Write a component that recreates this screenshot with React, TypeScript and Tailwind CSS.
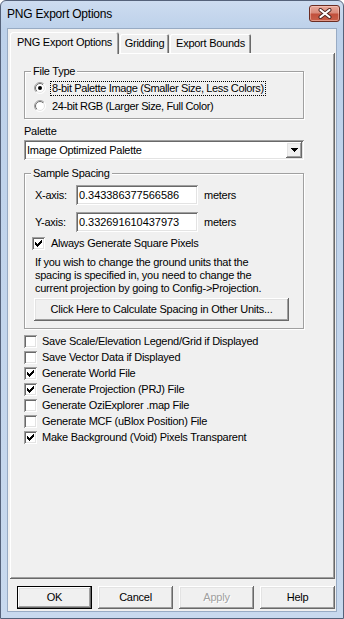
import React, { useId } from "react";

const raised =
  "shadow-[inset_-1px_-1px_0_#696969,inset_1px_1px_0_#ffffff,inset_-2px_-2px_0_#a0a0a0,inset_2px_2px_0_#e3e3e3]";
const sunken =
  "shadow-[inset_1px_1px_0_#a0a0a0,inset_-1px_-1px_0_#ffffff,inset_2px_2px_0_#696969,inset_-2px_-2px_0_#e3e3e3]";
const etched =
  "border border-[#a0a0a0] shadow-[inset_1px_1px_0_#ffffff,1px_1px_0_#ffffff]";

function Check({ checked }: { checked?: boolean }) {
  const cols = [5, 6, 7, 6, 5, 4, 3];
  return (
    <div className={`w-[13px] h-[13px] bg-white shrink-0 ${sunken}`}>
      {checked && (
        <svg width="13" height="13" viewBox="0 0 13 13" shapeRendering="crispEdges">
          {cols.map((y, i) => (
            <rect key={i} x={3 + i} y={y} width="1" height="3" fill="#000" />
          ))}
        </svg>
      )}
    </div>
  );
}

function Radio({ checked }: { checked?: boolean }) {
  const id = useId().replace(/[^a-zA-Z0-9]/g, "");
  return (
    <svg width="12" height="12" viewBox="0 0 12 12" className="shrink-0">
      <defs>
        <linearGradient id={`o${id}`} x1="0" y1="0" x2="1" y2="1">
          <stop offset="0.5" stopColor="#a0a0a0" />
          <stop offset="0.5" stopColor="#ffffff" />
        </linearGradient>
        <linearGradient id={`i${id}`} x1="0" y1="0" x2="1" y2="1">
          <stop offset="0.5" stopColor="#696969" />
          <stop offset="0.5" stopColor="#e3e3e3" />
        </linearGradient>
      </defs>
      <circle cx="6" cy="6" r="5.5" fill="#fff" stroke={`url(#o${id})`} />
      <circle cx="6" cy="6" r="4.5" fill="#fff" stroke={`url(#i${id})`} />
      {checked && <circle cx="6" cy="6" r="2" fill="#000" />}
    </svg>
  );
}

function CheckRow({ checked, label }: { checked?: boolean; label: string }) {
  return (
    <div className="flex items-center h-[16px]">
      <Check checked={checked} />
      <span className="ml-[5px]">{label}</span>
    </div>
  );
}

function CloseButton() {
  return (
    <div className="mt-[4px] w-[31px] h-[17px] rounded-[3px] border border-[#6b2c22] bg-[linear-gradient(to_bottom,#e9a99b_0%,#d98b7b_45%,#c1503c_55%,#c9604a_100%)] shadow-[inset_0_0_0_1px_rgba(255,220,210,0.45)] flex items-center justify-center">
      <svg width="14" height="11" viewBox="0 0 14 11">
        <path d="M2.5 2 L11.5 9 M11.5 2 L2.5 9" stroke="#4a2420" strokeWidth="4" strokeLinecap="round" fill="none" />
        <path d="M2.5 2 L11.5 9 M11.5 2 L2.5 9" stroke="#ffffff" strokeWidth="2.2" strokeLinecap="round" fill="none" />
      </svg>
    </div>
  );
}

function BottomButton({
  label,
  isDefault,
  disabled,
}: {
  label: string;
  isDefault?: boolean;
  disabled?: boolean;
}) {
  return (
    <div
      className={`w-[75px] h-[23px] flex items-center justify-center bg-[#f0f0f0] ${raised} ${
        isDefault ? "border border-[#000000]" : ""
      } ${disabled ? "text-[#a0a0a0] [text-shadow:1px_1px_0_#ffffff]" : ""}`}
    >
      {label}
    </div>
  );
}

export default function App() {
  return (
    <div className="w-[344px] h-[619px] flex flex-col border border-[#55627a] rounded-t-[6px] bg-[linear-gradient(to_bottom,#cddcf0,#bdd1ea_28px,#c8d9ee)] font-['Liberation_Sans',Arial,sans-serif] text-[11px] leading-[13px] tracking-[-0.25px] text-black overflow-hidden">
      {/* Title bar */}
      <div className="h-[27px] shrink-0 flex items-start pl-[6px] pr-[3px]">
        <span className="text-[12px] leading-[14px] mt-[6px] tracking-[-0.2px]">PNG Export Options</span>
        <div className="ml-auto">
          <CloseButton />
        </div>
      </div>

      {/* Client area */}
      <div className="mx-[6px] mb-[6px] flex-1 flex flex-col bg-[#f0f0f0] border border-[#98abc4]">
        {/* Tabs */}
        <div className="pt-[3px] pl-[2px] flex items-end h-[24px] shrink-0">
          <div className="relative z-10 -mb-px w-[109px] h-[22px] rounded-t-[3px] bg-[#f0f0f0] shadow-[inset_1px_1px_0_#ffffff,inset_-1px_0_0_#696969,inset_-2px_0_0_#a0a0a0] flex items-center justify-center pb-[1px]">
            PNG Export Options
          </div>
          <div className="ml-px w-[49px] h-[19px] rounded-t-[2px] shadow-[inset_1px_1px_0_#ffffff,inset_-1px_0_0_#696969,inset_-2px_0_0_#a0a0a0] flex items-center justify-center">
            Gridding
          </div>
          <div className="ml-px w-[81px] h-[19px] rounded-t-[2px] shadow-[inset_1px_1px_0_#ffffff,inset_-1px_0_0_#696969,inset_-2px_0_0_#a0a0a0] flex items-center justify-center">
            Export Bounds
          </div>
        </div>

        {/* Tab page */}
        <div className="ml-[2px] w-[325px] h-[526px] shrink-0 bg-[#f0f0f0] shadow-[inset_-1px_-1px_0_#696969,inset_1px_1px_0_#ffffff,inset_-2px_-2px_0_#a0a0a0] pl-[14px] pt-[18px] flex flex-col">
          {/* File Type */}
          <div className={`relative w-[280px] h-[48px] ${etched} pt-[7px] pl-[9px] flex flex-col`}>
            <span className="absolute left-[6px] -top-[7px] px-[2px] bg-[#f0f0f0]">File Type</span>
            <div className="flex items-center h-[18px]">
              <Radio checked />
              <span className="ml-[4px] px-px border border-dotted border-black tracking-[-0.36px]">
                8-bit Palette Image (Smaller Size, Less Colors)
              </span>
            </div>
            <div className="flex items-center h-[18px]">
              <Radio />
              <span className="ml-[6px] tracking-[-0.36px]">24-bit RGB (Larger Size, Full Color)</span>
            </div>
          </div>

          {/* Palette */}
          <div className="mt-[6px]">Palette</div>
          <div className={`mt-[2px] w-[280px] h-[20px] bg-white ${sunken} flex items-center`}>
            <span className="pl-[3px]">Image Optimized Palette</span>
            <div className={`ml-auto mr-[2px] w-[16px] h-[16px] bg-[#f0f0f0] ${raised} flex items-center justify-center`}>
              <svg width="7" height="4" viewBox="0 0 7 4" shapeRendering="crispEdges">
                <path d="M0 0 H7 V1 H6 V2 H5 V3 H4 V4 H3 V3 H2 V2 H1 V1 H0 Z" fill="#000" />
              </svg>
            </div>
          </div>

          {/* Sample Spacing */}
          <div className={`relative mt-[13px] w-[280px] h-[156px] ${etched} pt-[11px] pl-[10px] flex flex-col`}>
            <span className="absolute left-[6px] -top-[7px] px-[2px] bg-[#f0f0f0]">Sample Spacing</span>
            <div className="flex items-center h-[20px]">
              <span className="w-[41px]">X-axis:</span>
              <div className={`w-[122px] h-[20px] bg-white ${sunken} flex items-center pl-[3px] tracking-[-0.05px]`}>
                0.343386377566586
              </div>
              <span className="ml-[6px]">meters</span>
            </div>
            <div className="flex items-center h-[20px] mt-[7px]">
              <span className="w-[41px]">Y-axis:</span>
              <div className={`w-[122px] h-[20px] bg-white ${sunken} flex items-center pl-[3px] tracking-[-0.05px]`}>
                0.332691610437973
              </div>
              <span className="ml-[6px]">meters</span>
            </div>
            <div className="flex items-center h-[13px] mt-[5px] -ml-[3px]">
              <Check checked />
              <span className="ml-[6px]">Always Generate Square Pixels</span>
            </div>
            <div className="mt-[6px] flex flex-col">
              <span>If you wish to change the ground units that the</span>
              <span>spacing is specified in, you need to change the</span>
              <span>current projection by going to Config-&gt;Projection.</span>
            </div>
            <div className={`mt-[3px] -ml-[1px] w-[255px] h-[23px] bg-[#f0f0f0] ${raised} flex items-center justify-center`}>
              Click Here to Calculate Spacing in Other Units...
            </div>
          </div>

          {/* Checkbox options */}
          <div className="mt-[4px] flex flex-col">
            <CheckRow label="Save Scale/Elevation Legend/Grid if Displayed" />
            <CheckRow label="Save Vector Data if Displayed" />
            <CheckRow checked label="Generate World File" />
            <CheckRow checked label="Generate Projection (PRJ) File" />
            <CheckRow label="Generate OziExplorer .map File" />
            <CheckRow label="Generate MCF (uBlox Position) File" />
            <CheckRow checked label="Make Background (Void) Pixels Transparent" />
          </div>
        </div>

        {/* Dialog buttons */}
        <div className="mt-[7px] pl-[9px] flex gap-[6px]">
          <BottomButton label="OK" isDefault />
          <BottomButton label="Cancel" />
          <BottomButton label="Apply" disabled />
          <BottomButton label="Help" />
        </div>
      </div>
    </div>
  );
}
